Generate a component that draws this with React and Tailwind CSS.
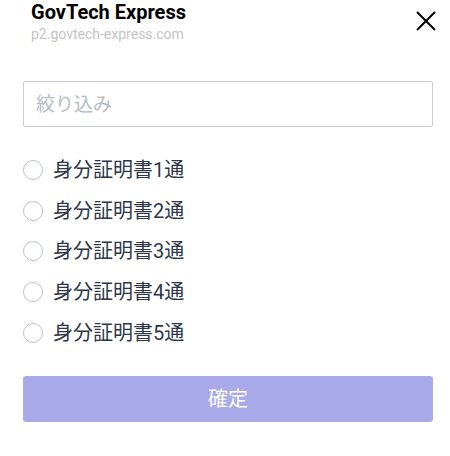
const items = ["身分証明書1通", "身分証明書2通", "身分証明書3通", "身分証明書4通", "身分証明書5通"];

const App = () => {
  return (
    <div className="w-[450px] h-[456px] bg-white pl-[23px] pr-[17px] font-['Roboto','Noto_Sans_CJK_JP',sans-serif]">
      {/* Header */}
      <div className="flex justify-between items-start">
        <div className="pl-2">
          <h1 className="text-[20px] leading-[24px] font-bold text-black">GovTech Express</h1>
          <p className="text-[14px] leading-[20px] text-[#c4c4c4]">p2.govtech-express.com</p>
        </div>
        <button className="mt-[10px] mr-[-4px] text-black">
          <svg width="22" height="22" viewBox="0 0 22 22" fill="none" stroke="currentColor" strokeWidth="2">
            <path d="M2 2L20 20M20 2L2 20" />
          </svg>
        </button>
      </div>

      {/* Filter */}
      <input
        type="text"
        placeholder="絞り込み"
        className="mt-[37px] w-full h-[46px] border border-[#c9cdd5] rounded-[2px] px-3 text-[19px] placeholder:text-[#b4bac6] outline-none"
      />

      {/* Options */}
      <div className="mt-[23px] flex flex-col">
        {items.map((item) => (
          <label key={item} className="flex items-center gap-[10px] h-[40.6px]">
            <span className="w-[20px] h-[20px] rounded-full border-[1.5px] border-[#bcc2cc]" />
            <span className="text-[20px] text-[#2d3748]">{item}</span>
          </label>
        ))}
      </div>

      {/* Confirm */}
      <button className="mt-[23px] w-full h-[46px] rounded-[3px] bg-[#aaa9ea] text-white text-[20px]">
        確定
      </button>
    </div>
  );
};

export default App;
